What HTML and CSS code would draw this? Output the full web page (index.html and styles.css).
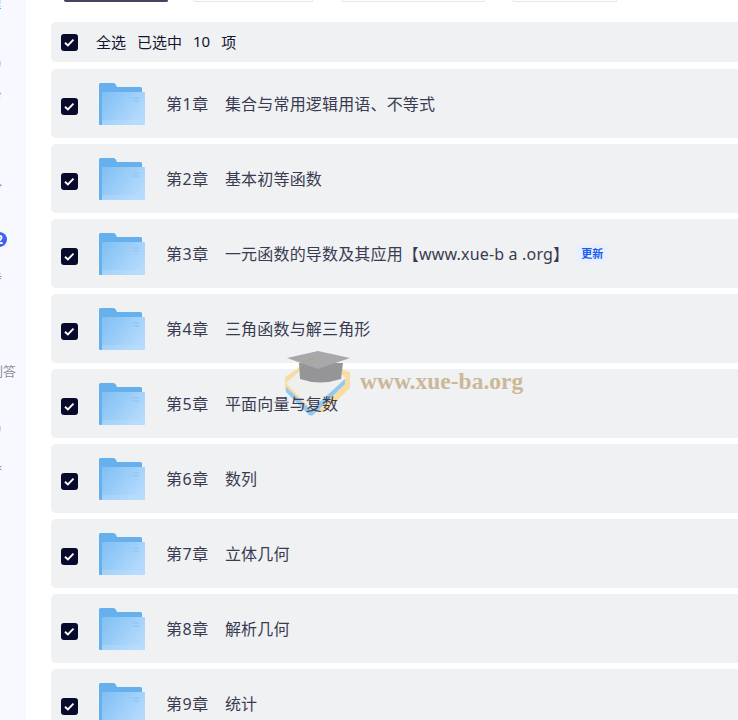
FILE: index.html
```html
<!DOCTYPE html>
<html lang="zh">
<head>
<meta charset="utf-8">
<title>文件列表</title>
<link rel="stylesheet" href="styles.css">
</head>
<body>
<svg class="defs" width="0" height="0" aria-hidden="true">
  <defs>
    <linearGradient id="f" x1="0" y1="0" x2="1" y2="0.6"><stop offset="0" stop-color="#7fbff3"/><stop offset="1" stop-color="#b4dafd"/></linearGradient>
    <symbol id="folder" viewBox="0 0 46 42">
      <path d="M1.500 0h13q1.500 0 2.300 1.500l1.200 2.500h23.500q1.500 0 1.500 1.500v30.500h-43v-34.500q0-1.500 1.500-1.500z" fill="#66b0ee"/>
      <path d="M0 2h3v40h-2q-1 0-1-1z" fill="#66b0ee"/>
      <rect x="3" y="9" width="43" height="33" rx="1" fill="url(#f)"/>
      <rect x="3" y="37" width="43" height="5" rx="1" fill="#c0e0fd" opacity=".35"/>
      <path d="M34 15h6M34 18h6" stroke="#8cc1ef" stroke-width="1.200"/>
    </symbol>
    <symbol id="tick" viewBox="0 0 17 17">
      <path d="M4 8.700l2.900 2.800 5.600-5.800" fill="none" stroke="#fff" stroke-width="1.900"/>
    </symbol>
  </defs>
</svg>
<div class="page">
  <aside class="side">
    <span class="side-item s1">理</span>
    <span class="side-item s2">0</span>
    <span class="side-item s3">台</span>
    <span class="side-item s4">令</span>
    <span class="side-badge">2</span>
    <span class="side-item s5">寺</span>
    <span class="side-item s6">刷答</span>
    <span class="side-item s7">0</span>
    <span class="side-item s8">具</span>
  </aside>
  <main class="main">
    <div class="tabs">
      <div class="tab tab-on"></div>
      <div class="tab t2"></div>
      <div class="tab t3"></div>
      <div class="tab t4"></div>
    </div>
    <div class="bar">
      <span class="check"><svg width="17" height="17"><use href="#tick"/></svg></span>
      <span class="bar-text">全选</span>
      <span class="bar-text">已选中</span>
      <span class="bar-text">10</span>
      <span class="bar-text">项</span>
    </div>
    <div class="row">
      <span class="check"><svg width="17" height="17"><use href="#tick"/></svg></span>
      <svg class="folder" width="46" height="42"><use href="#folder"/></svg>
      <span class="name"><span class="num">第1章</span>集合与常用逻辑用语、不等式</span>
    </div>
    <div class="row">
      <span class="check"><svg width="17" height="17"><use href="#tick"/></svg></span>
      <svg class="folder" width="46" height="42"><use href="#folder"/></svg>
      <span class="name"><span class="num">第2章</span>基本初等函数</span>
    </div>
    <div class="row">
      <span class="check"><svg width="17" height="17"><use href="#tick"/></svg></span>
      <svg class="folder" width="46" height="42"><use href="#folder"/></svg>
      <span class="name"><span class="num">第3章</span>一元函数的导数及其应用【www.xue-b a .org】</span>
      <span class="tag">更新</span>
    </div>
    <div class="row">
      <span class="check"><svg width="17" height="17"><use href="#tick"/></svg></span>
      <svg class="folder" width="46" height="42"><use href="#folder"/></svg>
      <span class="name"><span class="num">第4章</span>三角函数与解三角形</span>
    </div>
    <div class="row">
      <span class="check"><svg width="17" height="17"><use href="#tick"/></svg></span>
      <svg class="folder" width="46" height="42"><use href="#folder"/></svg>
      <span class="name"><span class="num">第5章</span>平面向量与复数</span>
    </div>
    <div class="row">
      <span class="check"><svg width="17" height="17"><use href="#tick"/></svg></span>
      <svg class="folder" width="46" height="42"><use href="#folder"/></svg>
      <span class="name"><span class="num">第6章</span>数列</span>
    </div>
    <div class="row">
      <span class="check"><svg width="17" height="17"><use href="#tick"/></svg></span>
      <svg class="folder" width="46" height="42"><use href="#folder"/></svg>
      <span class="name"><span class="num">第7章</span>立体几何</span>
    </div>
    <div class="row">
      <span class="check"><svg width="17" height="17"><use href="#tick"/></svg></span>
      <svg class="folder" width="46" height="42"><use href="#folder"/></svg>
      <span class="name"><span class="num">第8章</span>解析几何</span>
    </div>
    <div class="row">
      <span class="check"><svg width="17" height="17"><use href="#tick"/></svg></span>
      <svg class="folder" width="46" height="42"><use href="#folder"/></svg>
      <span class="name"><span class="num">第9章</span>统计</span>
    </div>
  </main>
  <div class="mark">
    <svg class="mark-art" viewBox="0 0 66 68" width="66" height="68">
      <path d="M0 27L15 17H50L65 22V38L40 62H25L0 40z" fill="#f7dca4"/>
      <path d="M1 33L15 21L55 23L61 28L28 61z" fill="#eef0f0"/>
      <path d="M1 37L26 60L60 29L60 34L28 65Q26 66 24 65L1 42z" fill="#91c9ef"/>
      <path d="M14 13H58L56 29Q35 36 15 29z" fill="#959597"/>
      <path d="M2 8L33 1L65 8L33 19z" fill="#a8a8aa"/>
      <path d="M31 8Q18 10 15 17" fill="none" stroke="#b3a67c" stroke-width="1"/>
    </svg>
    <span class="mark-text">www.xue-ba.org</span>
  </div>
</div>
</body>
</html>
```

FILE: styles.css
```css
* { box-sizing: border-box; }
html, body { margin: 0; padding: 0; width: 738px; height: 720px; overflow: hidden; background: #fff; }
.defs { position: absolute; }
.page { position: relative; display: flex; width: 738px; height: 720px; overflow: hidden; font-family: "Noto Sans", "Noto Sans CJK SC", sans-serif; }
.side { position: relative; flex: 0 0 26px; height: 720px; background: #f7f9ff; overflow: hidden; }
.side-item { position: absolute; font-size: 13px; line-height: 16px; color: #8d8f99; white-space: nowrap; }
.s1 { right: 25px; top: -5px; color: #3f74f2; }
.s2 { right: 25px; top: 55px; }
.s3 { right: 24px; top: 86px; }
.s4 { right: 24px; top: 178px; }
.s5 { right: 24px; top: 269px; }
.s6 { right: 10px; top: 363px; }
.s7 { right: 25px; top: 420px; }
.s8 { right: 24px; top: 455px; }
.side-badge { position: absolute; left: -8px; top: 232px; width: 15px; height: 15px; border-radius: 50%; background: #3a63f0; color: #fff; font-size: 12px; line-height: 15px; text-align: center; font-weight: 700; }
.main { flex: 0 0 712px; padding-left: 25px; }
.tabs { display: flex; height: 22px; align-items: flex-start; }
.tab { height: 2px; border: 1px solid #e6e6e8; border-top: 0; border-radius: 0 0 5px 5px; }
.tab-on { width: 104px; margin-left: 13px; background: #44455e; border-color: #44455e; }
.t2 { width: 120px; margin-left: 25px; }
.t3 { width: 144px; margin-left: 28px; }
.t4 { width: 105px; margin-left: 27px; }
.bar, .row { display: flex; align-items: center; width: 720px; background: #eff1f3; border-radius: 5px; padding-left: 10px; }
.bar { height: 40px; margin-bottom: 7px; gap: 11px; }
.row { height: 69px; margin-bottom: 6px; }
.check { flex: 0 0 17px; width: 17px; height: 17px; border-radius: 3px; background: #080a2c; display: block; }
.check svg { display: block; }
.bar .check { margin-right: 7px; }
.row .check { margin-top: 5px; }
.bar-text { font-size: 15px; color: #14152f; padding-bottom: 2px; }
.folder { flex: 0 0 46px; margin-left: 21px; margin-top: 1px; }
.name { position: relative; z-index: 2; margin-left: 21px; padding-bottom: 2px; font-size: 16px; letter-spacing: .17px; color: #3a3b50; white-space: nowrap; }
.num { margin-right: 16px; letter-spacing: .6px; }
.tag { margin-left: 7px; padding: 2px 5px; border-radius: 4px; background: #eaeffd; color: #1a5cf0; font-size: 11px; font-weight: 700; line-height: 15px; }
.mark { position: absolute; z-index: 1; left: 285px; top: 350px; display: flex; align-items: center; pointer-events: none; }
.mark-art { display: block; }
.mark-text { margin-left: 9px; margin-top: -5px; font-family: "Liberation Serif", serif; font-size: 23.500px; font-weight: 700; color: #cbb896; white-space: nowrap; }
```
